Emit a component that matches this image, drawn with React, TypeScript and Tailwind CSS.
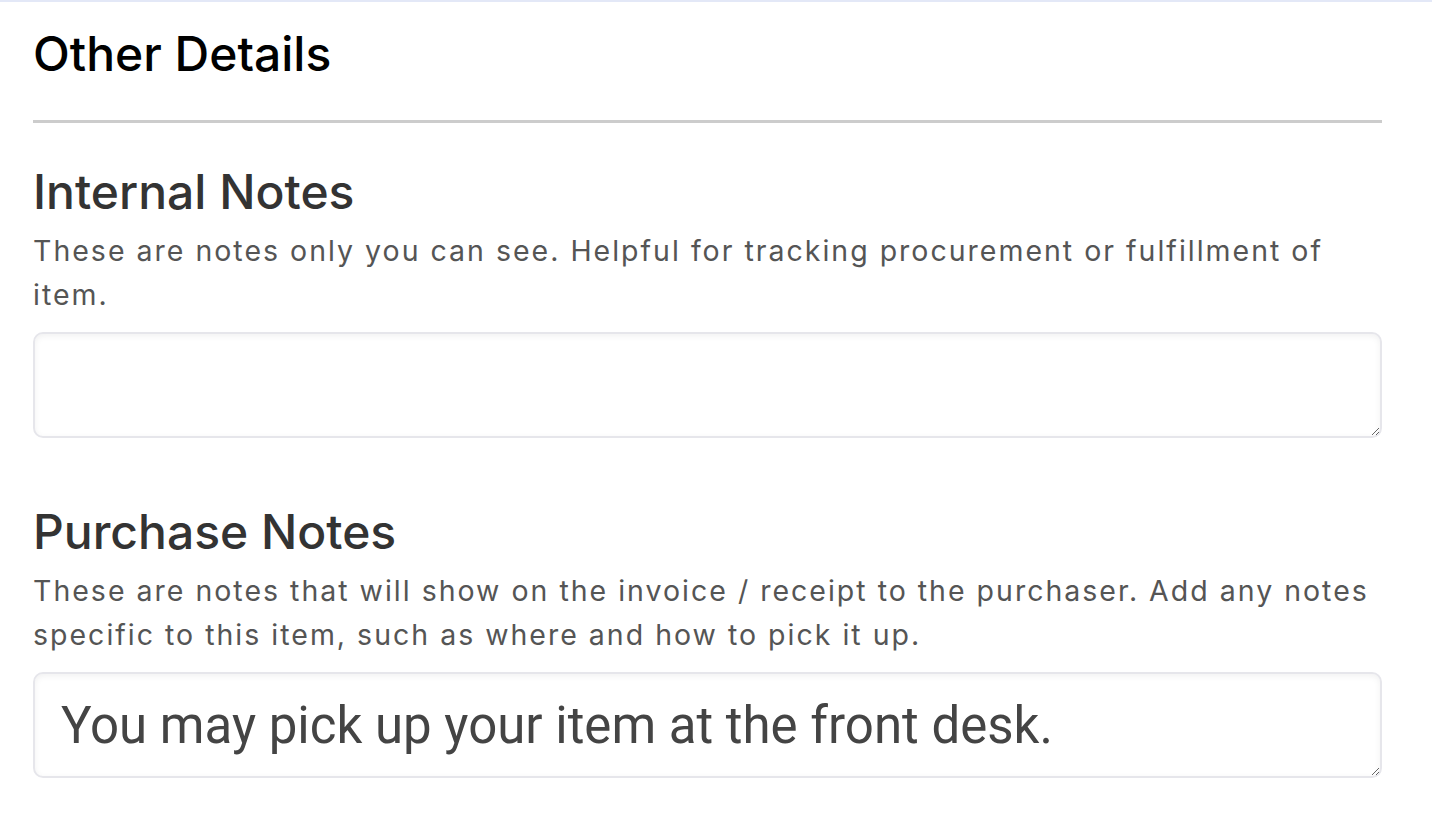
export default function App() {
  return (
    <div className="min-h-screen bg-white border-t-2 border-[#e3e8f7] font-['Inter',sans-serif]">
      <div className="pl-[33px] pr-[50px]">
        <h1 className="pt-[22px] text-[48px] leading-[60px] font-medium text-black">Other Details</h1>
        <div className="mt-[36px] h-[3px] bg-[#cccccc]" />

        <h2 className="mt-[39px] text-[48px] leading-[60px] font-medium text-[#333333]">Internal Notes</h2>
        <p className="pt-[7px] text-[28.5px] leading-[44px] text-[#555555] tracking-[2px]">
          These are notes only you can see. Helpful for tracking procurement or fulfillment of item.
        </p>
        <textarea className="mt-[15px] block w-full h-[106px] rounded-[10px] border-2 border-[#e6e6eb] shadow-[inset_0_2px_6px_rgba(0,0,0,0.06)] outline-none px-[26px] py-[14px] text-[51px] text-[#444] font-['Roboto',sans-serif]" />

        <h2 className="mt-[64px] text-[48px] leading-[60px] font-medium text-[#333333]">Purchase Notes</h2>
        <p className="pt-[7px] text-[28.5px] leading-[44px] text-[#555555] tracking-[2px]">
          These are notes that will show on the invoice / receipt to the purchaser. Add any notes specific to this item, such as where and how to pick it up.
        </p>
        <textarea
          defaultValue="You may pick up your item at the front desk."
          className="mt-[15px] block w-full h-[106px] rounded-[10px] border-2 border-[#e6e6eb] shadow-[inset_0_2px_6px_rgba(0,0,0,0.06)] outline-none px-[26px] py-[22px] text-[51px] leading-[60px] text-[#444] font-['Roboto',sans-serif]"
        />
      </div>
    </div>
  );
}
